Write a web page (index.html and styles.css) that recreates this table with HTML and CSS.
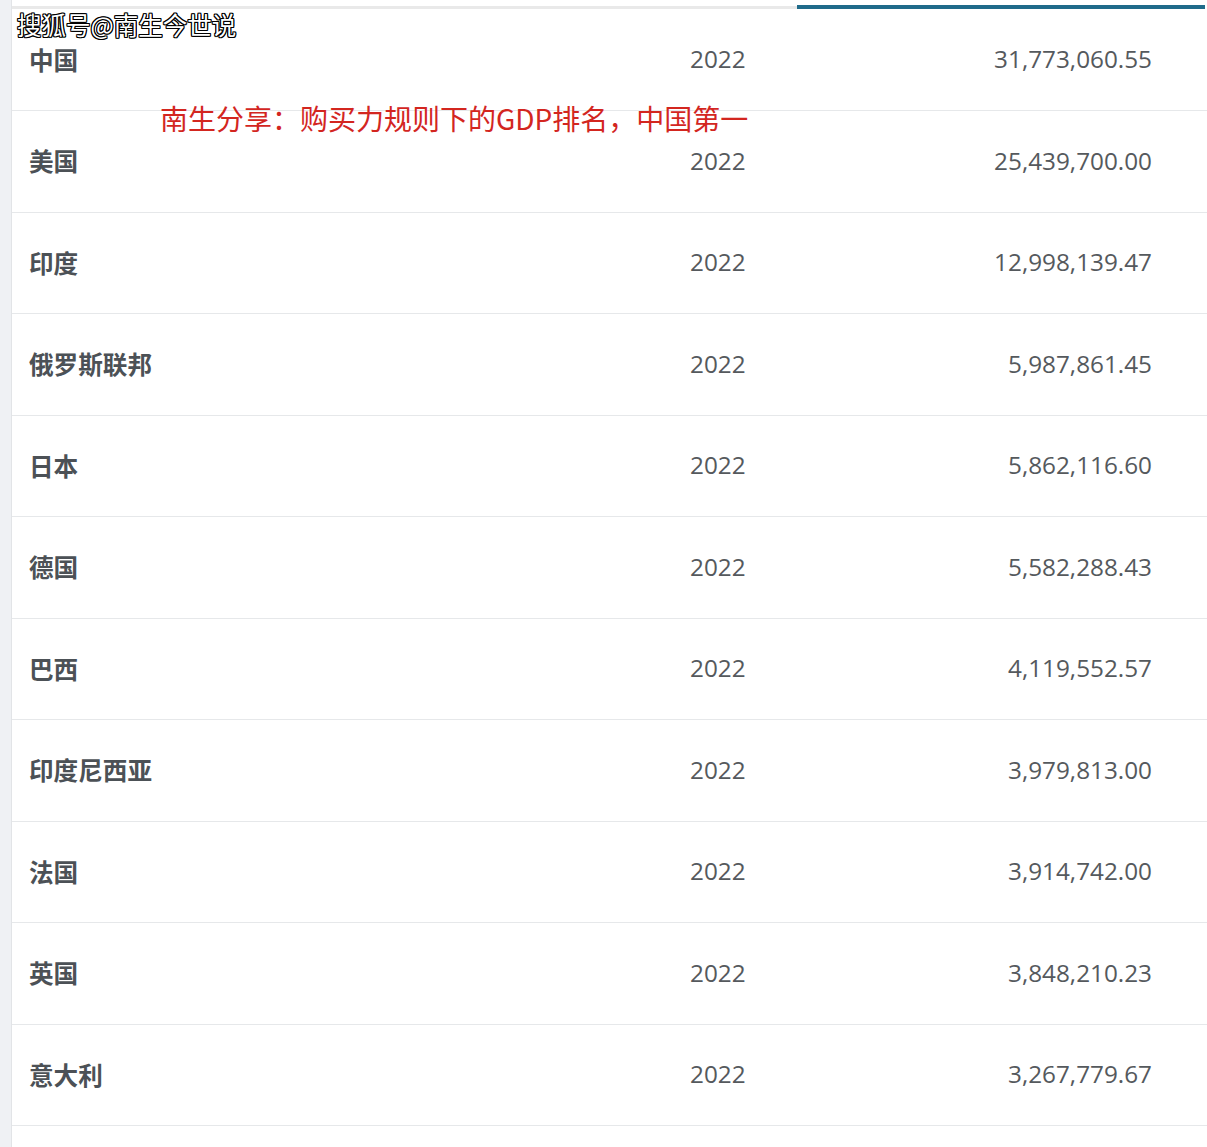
FILE: index.html
```html
<!DOCTYPE html>
<html lang="zh-CN">
<head>
<meta charset="utf-8">
<title>GDP</title>
<link rel="stylesheet" href="styles.css">
</head>
<body>
<div class="page">
  <div class="gutter"></div>
  <div class="main">
    <div class="tabs">
      <div class="tab"></div>
      <div class="tab active"></div>
    </div>
    <div class="table">
      <div class="row"><span class="name">中国</span><span class="year">2022</span><span class="value">31,773,060.55</span></div>
      <div class="row"><span class="name">美国</span><span class="year">2022</span><span class="value">25,439,700.00</span></div>
      <div class="row"><span class="name">印度</span><span class="year">2022</span><span class="value">12,998,139.47</span></div>
      <div class="row"><span class="name">俄罗斯联邦</span><span class="year">2022</span><span class="value">5,987,861.45</span></div>
      <div class="row"><span class="name">日本</span><span class="year">2022</span><span class="value">5,862,116.60</span></div>
      <div class="row"><span class="name">德国</span><span class="year">2022</span><span class="value">5,582,288.43</span></div>
      <div class="row"><span class="name">巴西</span><span class="year">2022</span><span class="value">4,119,552.57</span></div>
      <div class="row"><span class="name">印度尼西亚</span><span class="year">2022</span><span class="value">3,979,813.00</span></div>
      <div class="row"><span class="name">法国</span><span class="year">2022</span><span class="value">3,914,742.00</span></div>
      <div class="row"><span class="name">英国</span><span class="year">2022</span><span class="value">3,848,210.23</span></div>
      <div class="row"><span class="name">意大利</span><span class="year">2022</span><span class="value">3,267,779.67</span></div>
      <div class="row"></div>
    </div>
  </div>
  <div class="watermark">搜狐号@南生今世说</div>
  <div class="note">南生分享：购买力规则下的GDP排名，中国第一</div>
</div>
</body>
</html>
```
FILE: styles.css
```css
html, body {
  margin: 0;
  padding: 0;
  background: #ffffff;
}
.page {
  position: relative;
  display: flex;
  width: 1207px;
  height: 1147px;
  overflow: hidden;
}
.gutter {
  width: 11px;
  flex: none;
  background: #eff1f4;
  border-right: 1px solid #e2e4e7;
}
.main {
  width: 1195px;
  flex: none;
  display: flex;
  flex-direction: column;
}
.tabs {
  flex: none;
  display: flex;
  align-items: flex-end;
  height: 9px;
}
.tab {
  width: 785px;
  flex: none;
  height: 3px;
  background: #e9e9e9;
}
.tab.active {
  flex: 1;
  height: 4px;
  background: #1f6b8a;
  margin-right: 2px;
}
.table {
  flex: none;
  display: flex;
  flex-direction: column;
}
.row {
  flex: none;
  box-sizing: border-box;
  display: flex;
  align-items: center;
  width: 1195px;
  height: 101.5px;
  padding: 0 55px 2px 17px;
  border-bottom: 1px solid #e6e8ea;
  font-family: "Open Sans", "Noto Sans CJK SC", sans-serif;
  font-size: 24.3px;
  color: #55595d;
}
.row:first-child {
  height: 102px;
}
.name {
  flex: 0 0 661px;
  font-family: "Noto Sans CJK SC", sans-serif;
  font-weight: 700;
  color: #4c5156;
  font-size: 24.6px;
}
.year {
  flex: 0 0 200px;
}
.value {
  flex: 1;
  text-align: right;
  white-space: nowrap;
}
.watermark {
  position: absolute;
  left: 17px;
  top: 8px;
  font-family: "Noto Sans CJK SC", sans-serif;
  font-size: 24.5px;
  line-height: 34px;
  color: #ffffff;
  text-shadow: -1px -1px 0 #000, 1px -1px 0 #000, -1px 1px 0 #000, 1px 1px 0 #000, 0 1px 0 #000, 0 -1px 0 #000, 1px 0 0 #000, -1px 0 0 #000;
}
.note {
  position: absolute;
  left: 160px;
  top: 98px;
  font-family: "Noto Sans CJK SC", sans-serif;
  font-size: 28px;
  line-height: 40px;
  color: #d3261f;
  white-space: nowrap;
}
```
